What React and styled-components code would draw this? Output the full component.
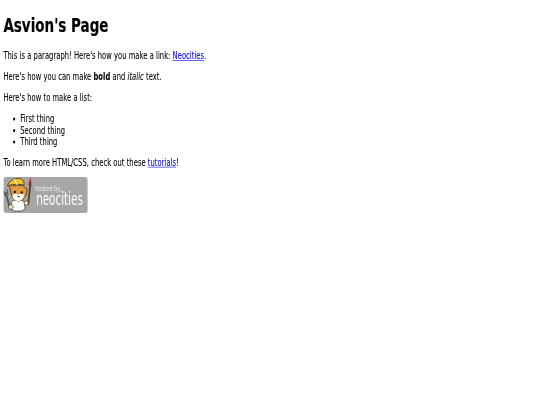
import React from "react";
import styled, { createGlobalStyle } from "styled-components";

const Global = createGlobalStyle`
  html, body { margin: 0; padding: 0; background: #fff; overflow: hidden; }
  #root { width: 540px; height: 405px; overflow: hidden; }
`;

/* The reference is a wide desktop page squeezed into a 4:3 frame. */
const Page = styled.main`
  width: 1280px;
  padding: 3px 8px 8px;
  box-sizing: border-box;
  transform: scale(0.4219, 0.6);
  transform-origin: 0 0;
  font-family: "DejaVu Sans", sans-serif;
  font-size: 16px;
  color: #000;
  filter: blur(0.6px);
`;
const Title = styled.h1`
  font-size: 32px;
  font-weight: 700;
  margin: 21.44px 0;
  -webkit-text-stroke: 0.3px #000;
`;
const Para = styled.p`
  margin: 16px 0;
  letter-spacing: 0.1px;
  -webkit-text-stroke: 0.15px #000;
`;
const List = styled.ul`
  margin: 16px 0;
  padding-left: 40px;
  letter-spacing: 0.1px;
  -webkit-text-stroke: 0.15px #000;
`;
const Item = styled.li``;
const Link = styled.a`
  color: #0000ee;
  -webkit-text-stroke: 0.15px #0000ee;
  text-decoration: underline;
`;
const Badge = styled.svg`
  display: block;
  width: 200px;
  height: 60px;
`;
const BadgeLink = styled.a`
  display: inline-block;
  margin-top: -2px;
`;

const NeocitiesBadge = () => (
  <Badge viewBox="0 0 85 36" preserveAspectRatio="none">
    <rect x="0" y="0" width="85" height="36" rx="3" fill="#a6a6a6" />
    {/* wrench */}
    <path d="M2 15l5 17" stroke="#55585c" strokeWidth="2" fill="none" />
    <path d="M0.5 14l1 4 3-1-1-5" stroke="#55585c" strokeWidth="1" fill="none" />
    {/* brush */}
    <path d="M27 8l-2 20" stroke="#5b3a22" strokeWidth="1.8" />
    <path d="M27.5 0l-2.5 8 3.5 .4z" fill="#a8283a" />
    {/* body */}
    <path d="M8 25c2-3 11-3 13 0l1 7-4 2H11l-3-2z" fill="#fff" stroke="#3a2a1a" strokeWidth=".7" />
    <circle cx="7.5" cy="30" r="2.4" fill="#f3e2c6" stroke="#3a2a1a" strokeWidth=".6" />
    <circle cx="23" cy="26" r="2.2" fill="#f3e2c6" stroke="#3a2a1a" strokeWidth=".6" />
    {/* head */}
    <path d="M7 13l-1-6 5 2c3-1 6-1 9 0l4 3-1 6c-2 4-5 6-8 6s-7-3-8-11z" fill="#e39a3e" stroke="#4a2f16" strokeWidth=".8" />
    <path d="M9 19c2-3 4-3 6-1 2-2 4-2 6 0-1 4-3 6-6 6s-5-2-6-5z" fill="#fff" />
    {/* hard hat */}
    <path d="M4 9c2-6 9-9 14-7 2 1 3 3 3 6-6-1-12-1-17 1z" fill="#f1c232" stroke="#4a3410" strokeWidth=".8" />
    <path d="M11 2l3 6" stroke="#fff1a8" strokeWidth="1.2" />
    <circle cx="11.5" cy="15" r="1.2" fill="#1c1c1c" />
    <circle cx="18.5" cy="15.5" r="1.2" fill="#1c1c1c" />
    <path d="M14 19l1.4 1.4 1.4-1.4z" fill="#3a2418" />
    <text x="32" y="14" fontFamily="'DejaVu Sans Condensed','DejaVu Sans',sans-serif" fontSize="7.5" textLength="27" lengthAdjust="spacingAndGlyphs" fill="#ededed">hosted by,</text>
    <text x="33" y="28" fontFamily="'DejaVu Sans Condensed','DejaVu Sans',sans-serif" fontSize="18" textLength="47" lengthAdjust="spacingAndGlyphs" fill="#fff">neocities</text>
  </Badge>
);

export default function App() {
  return (
    <>
      <Global />
      <Page>
        <Title>Asvion's Page</Title>
        <Para>
          This is a paragraph! Here's how you make a link: <Link href="#">Neocities</Link>.
        </Para>
        <Para>
          Here's how you can make <strong>bold</strong> and <em>italic</em> text.
        </Para>
        <Para>Here's how to make a list:</Para>
        <List>
          <Item>First thing</Item>
          <Item>Second thing</Item>
          <Item>Third thing</Item>
        </List>
        <Para>
          To learn more HTML/CSS, check out these <Link href="#">tutorials</Link>!
        </Para>
        <BadgeLink href="#">
          <NeocitiesBadge />
        </BadgeLink>
      </Page>
    </>
  );
}
